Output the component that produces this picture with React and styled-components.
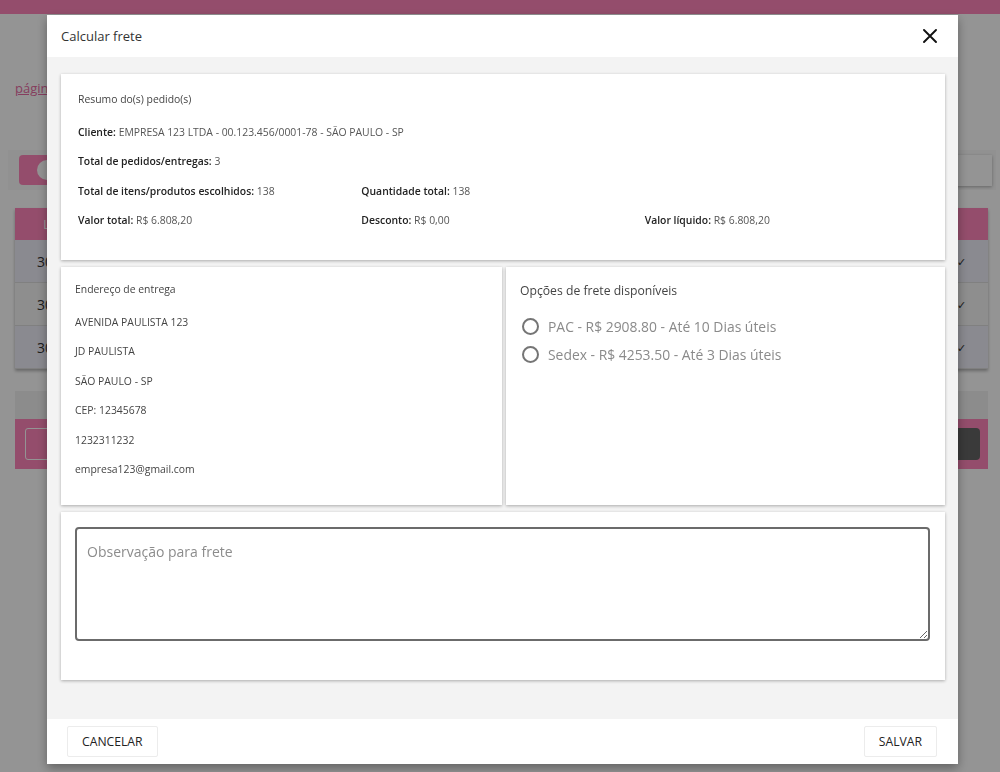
import styled, { createGlobalStyle } from "styled-components";

const GlobalStyle = createGlobalStyle`
    html, body {
        margin: 0;
        padding: 0;
        background: #fff;
        font-family: "Open Sans", "Liberation Sans", sans-serif;
    }
    * { box-sizing: border-box; }
`;

const pink = "#ff86ba";

const summary = {
    cliente: "EMPRESA 123 LTDA - 00.123.456/0001-78 - SÃO PAULO - SP",
    pedidos: "3",
    itens: "138",
    quantidade: "138",
    valorTotal: "R$ 6.808,20",
    desconto: "R$ 0,00",
    liquido: "R$ 6.808,20",
};

const endereco = [
    "AVENIDA PAULISTA 123",
    "JD PAULISTA",
    "SÃO PAULO - SP",
    "CEP: 12345678",
    "1232311232",
    "empresa123@gmail.com",
];

const opcoes = [
    "PAC - R$ 2908.80 - Até 10 Dias úteis",
    "Sedex - R$ 4253.50 - Até 3 Dias úteis",
];

function App() {
    return (
        <>
            <GlobalStyle />
            <Page>
                <TopBar />
                <Content>
                    <Crumb>página inicial</Crumb>
                    <FilterCard>
                        <Toggle>
                            <Knob />
                        </Toggle>
                        <SearchBox />
                    </FilterCard>
                    <Table>
                        <TableHead>Lote</TableHead>
                        {["301", "302", "303"].map((n, i) => (
                            <TableRow key={n} $alt={i % 2 === 1}>
                                <span>{n}</span>
                                <Chevron>✓</Chevron>
                            </TableRow>
                        ))}
                    </Table>
                    <PagerStrip />
                    <ActionStrip>
                        <GhostButton />
                        <DarkButton />
                    </ActionStrip>
                </Content>
            </Page>

            <Backdrop />

            <Modal>
                <Header>
                    <Title>Calcular frete</Title>
                    <CloseButton aria-label="Fechar">
                        <svg width="14" height="14" viewBox="0 0 14 14">
                            <path
                                d="M1 1 L13 13 M13 1 L1 13"
                                stroke="#111"
                                strokeWidth="1.9"
                                strokeLinecap="round"
                            />
                        </svg>
                    </CloseButton>
                </Header>

                <Body>
                    <Card $pad="17px 17px 25px">
                        <CardHeading>Resumo do(s) pedido(s)</CardHeading>
                        <InfoRow>
                            <Info>
                                <b>Cliente:</b> {summary.cliente}
                            </Info>
                        </InfoRow>
                        <InfoRow>
                            <Info>
                                <b>Total de pedidos/entregas:</b> {summary.pedidos}
                            </Info>
                        </InfoRow>
                        <InfoRow>
                            <Info>
                                <b>Total de itens/produtos escolhidos:</b> {summary.itens}
                            </Info>
                            <Info>
                                <b>Quantidade total:</b> {summary.quantidade}
                            </Info>
                        </InfoRow>
                        <InfoRow>
                            <Info>
                                <b>Valor total:</b> {summary.valorTotal}
                            </Info>
                            <Info>
                                <b>Desconto:</b> {summary.desconto}
                            </Info>
                            <Info>
                                <b>Valor líquido:</b> {summary.liquido}
                            </Info>
                        </InfoRow>
                    </Card>

                    <Split>
                        <Card $pad="14px 14px 21px">
                            <CardHeading>Endereço de entrega</CardHeading>
                            {endereco.map((l) => (
                                <AddressLine key={l}>{l}</AddressLine>
                            ))}
                        </Card>
                        <Card $pad="16px 14px">
                            <OptionsHeading>Opções de frete disponíveis</OptionsHeading>
                            <Options>
                                {opcoes.map((o) => (
                                    <Option key={o}>
                                        <Radio />
                                        {o}
                                    </Option>
                                ))}
                            </Options>
                        </Card>
                    </Split>

                    <Card $pad="15px 15px 39px 14px">
                        <Note placeholder="Observação para frete" />
                    </Card>
                </Body>

                <Footer>
                    <FooterButton>Cancelar</FooterButton>
                    <FooterButton>Salvar</FooterButton>
                </Footer>
            </Modal>
        </>
    );
}

export default App;

/* ---------- page behind the modal ---------- */

const Page = styled.div`
    min-height: 772px;
    background: #fff;
`;

const TopBar = styled.div`
    height: 14px;
    background: ${pink};
`;

const Content = styled.div`
    padding: 0 12px 0 15px;
`;

const Crumb = styled.a`
    display: block;
    margin-top: 66px;
    font-size: 13px;
    line-height: 16px;
    color: #e76aa3;
    text-decoration: underline;
`;

const FilterCard = styled.div`
    display: flex;
    align-items: center;
    justify-content: space-between;
    margin: 54px -8px 0 -7px;
    height: 40px;
    padding: 0 4px 0 11px;
    background: #fafafa;
`;

const Toggle = styled.div`
    display: flex;
    align-items: center;
    width: 70px;
    height: 30px;
    padding-left: 18px;
    border-radius: 4px;
    background: ${pink};
`;

const Knob = styled.span`
    width: 20px;
    height: 20px;
    border-radius: 50%;
    background: #fff;
`;

const SearchBox = styled.div`
    width: 160px;
    height: 31px;
    background: #fff;
    box-shadow: 0 1px 3px rgba(0, 0, 0, 0.3);
`;

const Table = styled.div`
    margin-top: 18px;
    box-shadow: 0 2px 3px rgba(0, 0, 0, 0.3);
`;

const TableHead = styled.div`
    height: 32px;
    padding-left: 28px;
    line-height: 32px;
    font-size: 13px;
    color: #fff;
    background: ${pink};
`;

const TableRow = styled.div`
    display: flex;
    align-items: center;
    justify-content: space-between;
    height: 43px;
    padding: 0 22px;
    font-size: 14px;
    color: #333;
    background: ${(p) => (p.$alt ? "#f4f4f4" : "#eeeef8")};
    border-bottom: 1px solid #ddd;
`;

const Chevron = styled.span`
    font-size: 11px;
    color: #333;
`;

const PagerStrip = styled.div`
    margin-top: 22px;
    height: 28px;
    background: #f2f2f2;
`;

const ActionStrip = styled.div`
    display: flex;
    align-items: center;
    justify-content: space-between;
    height: 50px;
    padding: 0 8px 0 10px;
    background: ${pink};
`;

const GhostButton = styled.div`
    width: 120px;
    height: 32px;
    border: 1px solid #fff;
    border-radius: 3px;
`;

const DarkButton = styled.div`
    width: 120px;
    height: 32px;
    border-radius: 4px;
    background: #646464;
`;

const Backdrop = styled.div`
    position: fixed;
    inset: 0;
    background: rgba(0, 0, 0, 0.42);
`;

/* ---------- modal ---------- */

const Modal = styled.div`
    position: fixed;
    top: 15px;
    left: 47px;
    width: 911px;
    display: flex;
    flex-direction: column;
    background: #f3f3f3;
    box-shadow: 0 4px 10px rgba(0, 0, 0, 0.35);
`;

const Header = styled.div`
    display: flex;
    align-items: center;
    justify-content: space-between;
    height: 42px;
    padding: 0 21px 0 14px;
    background: #fff;
`;

const Title = styled.h2`
    margin: 0;
    font-size: 13px;
    font-weight: 400;
    color: #333;
`;

const CloseButton = styled.button`
    display: flex;
    padding: 0;
    border: none;
    background: none;
    cursor: pointer;
`;

const Body = styled.div`
    display: flex;
    flex-direction: column;
    gap: 7px;
    padding: 17px 13px 39px 14px;
`;

const Card = styled.div`
    padding: ${(p) => p.$pad};
    background: #fff;
    box-shadow: 0 1px 3px rgba(0, 0, 0, 0.3);
`;

const CardHeading = styled.div`
    margin-bottom: 10px;
    font-size: 10.4px;
    line-height: 16px;
    color: #444;
`;

const InfoRow = styled.div`
    display: grid;
    grid-template-columns: repeat(3, 1fr);
    align-items: center;
    height: 29.5px;
`;

const Info = styled.div`
    font-size: 10.4px;
    color: #555;
    white-space: nowrap;

    b {
        font-weight: 600;
        color: #222;
    }
`;

const Split = styled.div`
    display: grid;
    grid-template-columns: 441px 1fr;
    gap: 4px;
`;

const AddressLine = styled.div`
    display: flex;
    align-items: center;
    height: 29.5px;
    font-size: 10.4px;
    color: #444;
`;

const OptionsHeading = styled.div`
    font-size: 12.2px;
    line-height: 16px;
    color: #444;
`;

const Options = styled.div`
    display: flex;
    flex-direction: column;
    margin-top: 13px;
`;

const Option = styled.label`
    display: flex;
    align-items: center;
    gap: 9px;
    height: 28px;
    padding-left: 2px;
    font-size: 13.9px;
    color: #8a8a8a;
`;

const Radio = styled.span`
    width: 17px;
    height: 17px;
    border: 2px solid #757575;
    border-radius: 50%;
`;

const Note = styled.textarea`
    display: block;
    width: 100%;
    height: 114px;
    padding: 13px 10px;
    border: 2px solid #6b6b6b;
    border-radius: 4px;
    font-family: "Open Sans", "Liberation Sans", sans-serif;
    font-size: 14px;
    color: #333;
    background: #fff;

    &::placeholder {
        color: #8c8c8c;
    }
`;

const Footer = styled.div`
    display: flex;
    align-items: center;
    justify-content: space-between;
    height: 45px;
    padding: 0 21px 0 20px;
    background: #fff;
`;

const FooterButton = styled.button`
    height: 31px;
    padding: 0 14px;
    border: 1px solid #ececec;
    border-radius: 2px;
    background: #fff;
    font-family: "Open Sans", "Liberation Sans", sans-serif;
    font-size: 12.2px;
    text-transform: uppercase;
    color: #222;
    cursor: pointer;
`;
